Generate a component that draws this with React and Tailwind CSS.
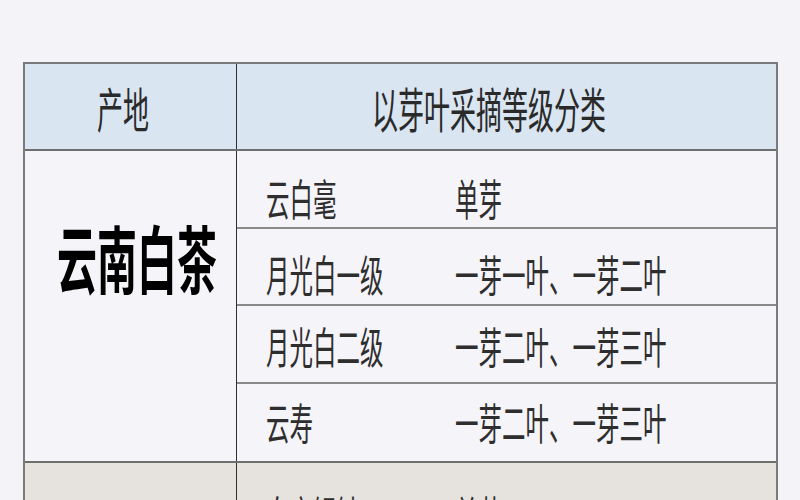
const rows = [
  { name: '云白毫', grade: '单芽', h: 'h-[78px]', pad: 'pt-[20px]' },
  { name: '月光白一级', grade: '一芽一叶、一芽二叶', h: 'h-[77px]', pad: 'pt-[16px]' },
  { name: '月光白二级', grade: '一芽二叶、一芽三叶', h: 'h-[78px]', pad: 'pt-[6px]' },
  { name: '云寿', grade: '一芽二叶、一芽三叶', h: 'h-[77px]', pad: 'pt-0' },
]

function Tall({ children, className = '' }) {
  return (
    <span className={`inline-block whitespace-nowrap scale-y-[1.85] ${className}`}>
      {children}
    </span>
  )
}

export default function App() {
  return (
    <div
      className="h-[500px] overflow-hidden bg-[#f4f3f8] pt-[62px] pl-[23px]"
      style={{ fontFamily: '"Noto Sans CJK SC", "Noto Sans", sans-serif' }}
    >
      <div className="w-[755px] border-x-2 border-t-2 border-[#7a7a7a]">
        {/* Header */}
        <div className="grid grid-cols-[212px_1fr] h-[87px] bg-[#d9e5f1] border-b-2 border-[#6e6e6e]">
          <div className="flex items-center pl-[72px] border-r border-[#2f2f2f] text-[#2a2a2a]">
            <Tall className="text-[26px]">产地</Tall>
          </div>
          <div className="flex items-center pl-[135px] text-[#2a2a2a]">
            <Tall className="text-[26px]">以芽叶采摘等级分类</Tall>
          </div>
        </div>

        {/* 云南白茶 */}
        <div className="grid grid-cols-[212px_1fr] border-b-2 border-[#6e6e6e] bg-[#f5f4f9]">
          <div className="flex items-center pl-[32px] pb-[98px] border-r border-[#2f2f2f]">
            <Tall className="text-[40px] font-bold text-black">云南白茶</Tall>
          </div>
          <div className="flex flex-col">
            {rows.map((r, i) => (
              <div
                key={r.name}
                className={`flex items-center ${r.h} ${r.pad} pl-[29px] text-[#2e2e2e] ${
                  i < rows.length - 1 ? 'border-b-2 border-[#8a8a8a]' : ''
                }`}
              >
                <div className="w-[189px]">
                  <Tall className="text-[23.5px]">{r.name}</Tall>
                </div>
                <Tall className="text-[23.5px]">{r.grade}</Tall>
              </div>
            ))}
          </div>
        </div>

        {/* next section, cut off by the window */}
        <div className="grid grid-cols-[212px_1fr] h-[80px] bg-[#e6e3de]">
          <div className="border-r border-[#2f2f2f]" />
          <div className="flex items-start pt-[35px] pl-[29px] text-[#2e2e2e]">
            <div className="w-[189px]">
              <Tall className="text-[23.5px]">白毫银针</Tall>
            </div>
            <Tall className="text-[23.5px]">单芽</Tall>
          </div>
        </div>
      </div>
    </div>
  )
}
